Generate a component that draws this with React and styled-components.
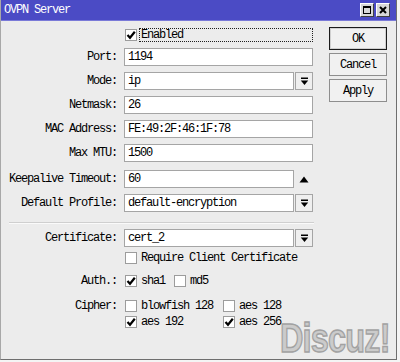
import React from 'react';
import styled, { createGlobalStyle } from 'styled-components';

const Global = createGlobalStyle`
  html, body { margin: 0; padding: 0; background: #f4f4f4; }
  body {
    font-family: "Liberation Mono", "DejaVu Sans Mono", monospace;
    font-size: 12px;
    letter-spacing: -1.2px;
    color: #000;
  }
`;

const Window = styled.div`
  position: relative;
  width: 397px;
  height: 360px;
  box-sizing: border-box;
  border-left: 1px solid #a8a8a8;
  border-right: 1px solid #6e6e6e;
  border-bottom: 1px solid #6e6e6e;
  background: #ececec;
  display: flex;
  flex-direction: column;
  overflow: hidden;
`;

const TitleBar = styled.div`
  height: 21px;
  flex-shrink: 0;
  background: #4b4bc5;
  border-bottom: 1px solid #7a7ad8;
  box-sizing: border-box;
  display: flex;
  align-items: center;
  justify-content: space-between;
  padding: 0 6px 0 3px;
`;

const Title = styled.span`
  color: #fff;
  line-height: 1;
`;

const TitleButtons = styled.div`
  display: flex;
  gap: 2px;
`;

const TitleButton = styled.div`
  width: 14px;
  height: 14px;
  box-sizing: border-box;
  background: #d8d8d8;
  border: 1px solid;
  border-color: #ffffff #404040 #404040 #ffffff;
  display: flex;
  align-items: center;
  justify-content: center;
`;

const Body = styled.div`
  flex: 1;
  display: flex;
`;

const Form = styled.div`
  width: 312px;
  display: flex;
  flex-direction: column;
`;

const Row = styled.div`
  display: flex;
  align-items: ${(p) => (p.$top ? 'flex-start' : 'center')};
  gap: 7px;
  height: ${(p) => p.$h || 18}px;
  margin-top: ${(p) => p.$mt || 0}px;
`;

const Label = styled.div`
  width: 116px;
  flex-shrink: 0;
  text-align: right;
  white-space: nowrap;
  line-height: ${(p) => (p.$lh ? `${p.$lh}px` : 'normal')};
`;

const Field = styled.div`
  width: 189px;
  display: flex;
  align-items: center;
  gap: 1px;
`;

const Input = styled.div`
  width: ${(p) => p.$w || 189}px;
  height: 18px;
  box-sizing: border-box;
  background: #fff;
  border: 1px solid #a5a5a5;
  padding: 0 3px;
  display: flex;
  align-items: center;
  white-space: nowrap;
  overflow: hidden;
`;

const DropButton = styled.div`
  width: 18px;
  height: 18px;
  box-sizing: border-box;
  border: 1px solid #a5a5a5;
  background: #efefef;
  display: flex;
  align-items: center;
  justify-content: center;
`;

const ArrowSlot = styled.div`
  width: 18px;
  height: 18px;
  display: flex;
  align-items: center;
  justify-content: center;
`;

const FocusBox = styled.div`
  flex: 1;
  height: 14px;
  box-sizing: border-box;
  border: 1px dotted #202020;
  margin-left: 1px;
  padding-left: 1px;
  display: flex;
  align-items: center;
`;

const Box = styled.div`
  width: 12px;
  height: 12px;
  flex-shrink: 0;
  box-sizing: border-box;
  background: #fff;
  border: 1px solid #9c9c9c;
  margin-left: ${(p) => p.$ml || 0}px;
  display: flex;
  align-items: center;
  justify-content: center;
`;

const CheckItem = styled.div`
  display: flex;
  align-items: center;
  gap: 4px;
  height: 16px;
  margin-left: ${(p) => p.$ml || 0}px;
  white-space: nowrap;
`;

const CipherGrid = styled.div`
  display: grid;
  grid-template-columns: 98px 98px;
  grid-auto-rows: 16px;
  margin-left: 1px;
`;

const Separator = styled.div`
  margin: 10px 0 0 8px;
  width: 305px;
  height: 1px;
  background: #cfcfcf;
  border-bottom: 1px solid #fafafa;
`;

const ButtonCol = styled.div`
  display: flex;
  flex-direction: column;
  gap: 3px;
  padding-top: 6px;
  margin-left: 16px;
`;

const Button = styled.div`
  width: 58px;
  height: 23px;
  box-sizing: border-box;
  background: #f1f1f1;
  border: 1px solid ${(p) => (p.$default ? '#1a1a1a' : '#8e8e8e')};
  box-shadow: ${(p) => (p.$default ? 'inset 0 0 0 1px #d0d0d0' : 'none')};
  display: flex;
  align-items: center;
  justify-content: center;
`;

const Watermark = styled.div`
  position: absolute;
  left: 279px;
  top: 318px;
  font-family: "Liberation Sans", Arial, sans-serif;
  font-weight: bold;
  font-size: 41px;
  letter-spacing: -1px;
  line-height: 1;
  color: #cbcbcb;
  -webkit-text-stroke: 1.5px #a2a2a2;
  transform: scaleX(0.79);
  transform-origin: left top;
  pointer-events: none;
`;

const Check = () => (
  <svg width="10" height="10" viewBox="0 0 10 10">
    <path d="M1.5 5 L4 7.8 L8.8 1.8" fill="none" stroke="#000" strokeWidth="2.2" />
  </svg>
);

const Checkbox = ({ checked, ml }) => <Box $ml={ml}>{checked && <Check />}</Box>;

const DownIcon = () => (
  <svg width="9" height="9" viewBox="0 0 9 9">
    <rect x="1" y="0.5" width="7" height="1.5" fill="#000" />
    <path d="M0.8 3.5 H8.2 L4.5 8 Z" fill="#000" />
  </svg>
);

const UpIcon = () => (
  <svg width="10" height="7" viewBox="0 0 10 7">
    <path d="M0.5 6.5 H9.5 L5 0.5 Z" fill="#000" />
  </svg>
);

const Combo = ({ value }) => (
  <Field>
    <Input $w={170}>{value}</Input>
    <DropButton>
      <DownIcon />
    </DropButton>
  </Field>
);

export default function App() {
  return (
    <>
      <Global />
      <Window>
        <TitleBar>
          <Title>OVPN Server</Title>
          <TitleButtons>
            <TitleButton>
              <svg width="8" height="8" viewBox="0 0 8 8">
                <rect x="0.5" y="0.5" width="7" height="7" fill="none" stroke="#000" />
                <rect x="0" y="0" width="8" height="2" fill="#000" />
              </svg>
            </TitleButton>
            <TitleButton>
              <svg width="8" height="8" viewBox="0 0 8 8">
                <path d="M1 1 L7 7 M7 1 L1 7" stroke="#000" strokeWidth="2" />
              </svg>
            </TitleButton>
          </TitleButtons>
        </TitleBar>
        <Body>
          <Form>
            <Row $mt={5}>
              <Label />
              <Field>
                <Checkbox checked ml={1} />
                <FocusBox>Enabled</FocusBox>
              </Field>
            </Row>
            <Row $mt={4}>
              <Label>Port:</Label>
              <Input>1194</Input>
            </Row>
            <Row $mt={6}>
              <Label>Mode:</Label>
              <Combo value="ip" />
            </Row>
            <Row $mt={6}>
              <Label>Netmask:</Label>
              <Input>26</Input>
            </Row>
            <Row $mt={6}>
              <Label>MAC Address:</Label>
              <Input>FE:49:2F:46:1F:78</Input>
            </Row>
            <Row $mt={6}>
              <Label>Max MTU:</Label>
              <Input>1500</Input>
            </Row>
            <Row $mt={8}>
              <Label>Keepalive Timeout:</Label>
              <Field>
                <Input $w={170}>60</Input>
                <ArrowSlot>
                  <UpIcon />
                </ArrowSlot>
              </Field>
            </Row>
            <Row $mt={6}>
              <Label>Default Profile:</Label>
              <Combo value="default-encryption" />
            </Row>
            <Separator />
            <Row $mt={5}>
              <Label>Certificate:</Label>
              <Combo value="cert_2" />
            </Row>
            <Row $mt={3} $h={16}>
              <Label />
              <CheckItem $ml={1}>
                <Checkbox />
                Require Client Certificate
              </CheckItem>
            </Row>
            <Row $mt={7} $h={16}>
              <Label>Auth.:</Label>
              <CheckItem $ml={1}>
                <Checkbox checked />
                sha1
              </CheckItem>
              <CheckItem $ml={2}>
                <Checkbox />
                md5
              </CheckItem>
            </Row>
            <Row $mt={9} $h={32} $top>
              <Label $lh={16}>Cipher:</Label>
              <CipherGrid>
                <CheckItem>
                  <Checkbox />
                  blowfish 128
                </CheckItem>
                <CheckItem>
                  <Checkbox />
                  aes 128
                </CheckItem>
                <CheckItem>
                  <Checkbox checked />
                  aes 192
                </CheckItem>
                <CheckItem>
                  <Checkbox checked />
                  aes 256
                </CheckItem>
              </CipherGrid>
            </Row>
          </Form>
          <ButtonCol>
            <Button $default>OK</Button>
            <Button>Cancel</Button>
            <Button>Apply</Button>
          </ButtonCol>
        </Body>
        <Watermark>Discuz!</Watermark>
      </Window>
    </>
  );
}
